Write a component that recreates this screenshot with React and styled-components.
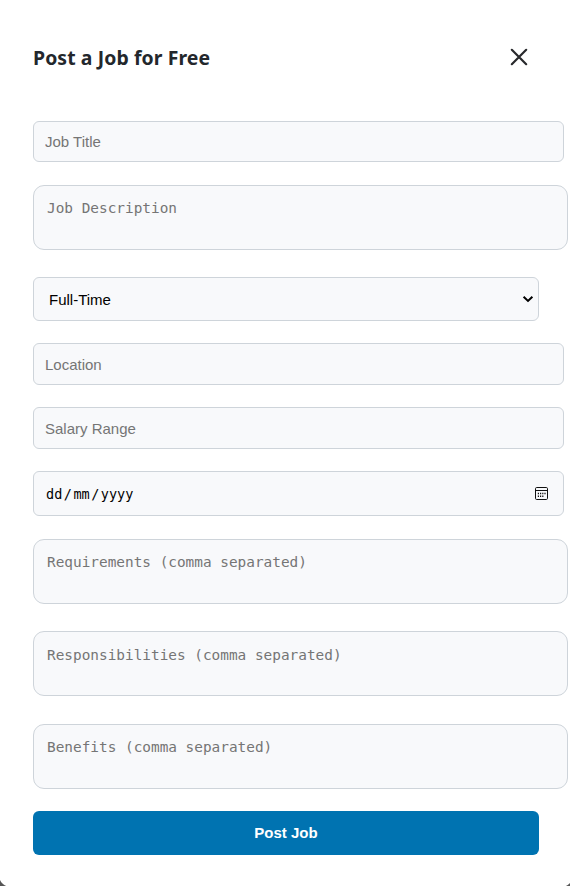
import React from "react";
import styled, { createGlobalStyle, css } from "styled-components";

const GlobalStyle = createGlobalStyle`
  * { box-sizing: border-box; }
  body { margin: 0; overflow: hidden; background: #555; }
`;

const Backdrop = styled.div`
  display: flex;
  width: 570px;
  height: 886px;
  overflow: hidden;
  background: #555;
`;

const Modal = styled.section`
  flex: none;
  width: 574px;
  height: 894px;
  margin: -7px 0 0 -1px;
  padding: 49px 34px 0;
  border-radius: 12px;
  background: #fff;
`;

const Header = styled.header`
  display: flex;
  align-items: center;
  justify-content: space-between;
  height: 32px;
  margin-bottom: 47px;
`;

const Title = styled.h2`
  margin: 0;
  color: #23272c;
  font: 700 19.4px/32px "Noto Sans", "Open Sans", sans-serif;
  letter-spacing: 0.1px;
  white-space: nowrap;
`;

const CloseButton = styled.button`
  display: flex;
  margin: 0 9.5px 3px 0;
  padding: 0;
  border: 0;
  background: none;
  color: #28292c;
`;

const Form = styled.form`
  display: flex;
  flex-direction: column;
  align-items: flex-start;
`;

const field = css`
  display: block;
  width: 531px;
  height: ${(p) => p.$height || 42}px;
  margin: 0 0 ${(p) => p.$gap || 22}px;
  border: 1px solid #ced4da;
  border-radius: 6px;
  outline: 0;
  background: #f8f9fb;
  color: #000;
  font: 15px "Liberation Sans", Arial, sans-serif;
  &::placeholder { color: #757575; opacity: 1; }
`;

const TextInput = styled.input`
  ${field}
  flex: none;
  padding: 1px 11px;
`;

const TextArea = styled.textarea`
  ${field}
  flex: none;
  width: 535px;
  height: 65px;
  padding: ${(p) => p.$padTop || 14}px 13px 0;
  border-radius: 11px;
  font: 14.4px/17px "DejaVu Sans Mono", monospace;
  resize: none;
  overflow: hidden;
`;

const SelectWrap = styled.div`
  display: grid;
  align-items: center;
  width: 506px;
  margin-bottom: 22px;
  > * { grid-area: 1 / 1; }
  > svg { justify-self: end; margin-right: 5px; pointer-events: none; }
`;

const Select = styled.select`
  ${field}
  width: 506px;
  margin: 0;
  padding: 0 24px 0 15px;
  appearance: none;
`;

const DateField = styled.div`
  ${field}
  flex: none;
  display: flex;
  align-items: center;
  justify-content: space-between;
  padding: 0 14px 0 12px;
`;

const DateText = styled.span`
  display: flex;
  gap: 1.5px;
  padding-top: 1px;
  font: 13.5px/18px "DejaVu Sans Mono", monospace;
`;

const SubmitButton = styled.button`
  width: 506px;
  height: 44px;
  padding: 0 0 2px;
  border: 0;
  border-radius: 6px;
  background: #0073b1;
  color: #fff;
  font: 700 15px "Liberation Sans", Arial, sans-serif;
`;

const CloseIcon = () => (
  <svg width="22" height="22" viewBox="0 0 22 22" fill="none" stroke="currentColor" strokeWidth="2.2" strokeLinecap="round">
    <path d="M3.8 3.8 18.2 18.2M18.2 3.8 3.8 18.2" />
  </svg>
);

const ChevronIcon = () => (
  <svg width="12" height="8" viewBox="0 0 12 8" fill="none" stroke="#000" strokeWidth="2">
    <path d="M1.6 1.7 6 5.9 10.4 1.7" />
  </svg>
);

const CalendarIcon = () => (
  <svg width="15" height="15" viewBox="0 0 15 15" fill="none">
    <rect x="1.5" y="1.5" width="12" height="12" rx="1.2" stroke="#111" />
    <path d="M1.5 4.5h12" stroke="#111" />
    <path d="M6 7.5h1.2M8.2 7.5h1.2M10.4 7.5h1.2M3.8 7.5h1.2M3.8 10.2h1.2M6 10.2h1.2M8.2 10.2h1.2" stroke="#111" strokeWidth="1.4" />
  </svg>
);

export default function App() {
  return (
    <>
      <GlobalStyle />
      <Backdrop>
        <Modal>
          <Header>
            <Title>Post a Job for Free</Title>
            <CloseButton aria-label="Close"><CloseIcon /></CloseButton>
          </Header>
          <Form>
            <TextInput placeholder="Job Title" $height={41} $gap={23} />
            <TextArea placeholder="Job Description" $gap={27} />
            <SelectWrap>
              <Select $height={44}>
                <option>Full-Time</option>
              </Select>
              <ChevronIcon />
            </SelectWrap>
            <TextInput placeholder="Location" />
            <TextInput placeholder="Salary Range" />
            <DateField $height={45} $gap={23}>
              <DateText><span>dd</span><span>/</span><span>mm</span><span>/</span><span>yyyy</span></DateText>
              <CalendarIcon />
            </DateField>
            <TextArea placeholder="Requirements (comma separated)" $gap={27} />
            <TextArea placeholder="Responsibilities (comma separated)" $gap={28} $padTop={15} />
            <TextArea placeholder="Benefits (comma separated)" />
            <SubmitButton type="button">Post Job</SubmitButton>
          </Form>
        </Modal>
      </Backdrop>
    </>
  );
}
